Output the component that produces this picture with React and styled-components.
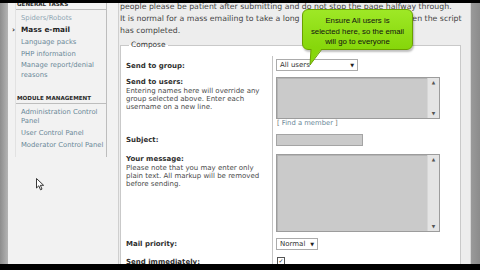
import React from "react";
import styled, { createGlobalStyle } from "styled-components";

const GlobalStyle = createGlobalStyle`
  html, body {
    margin: 0;
    padding: 0;
    background: #000;
  }
  body {
    font-family: "DejaVu Sans", Verdana, sans-serif;
  }
`;

const colors = {
  link: "#6a8898",
  text: "#444",
  label: "#2e2e2e",
  line: "#c9c9c9",
  field: "#cacaca",
};

const Screen = styled.div`
  position: relative;
  width: 480px;
  height: 270px;
  background: #000;
  overflow: hidden;
`;

const Bar = styled.div`
  height: ${(p) => p.$h}px;
  background: #000;
`;

const Viewport = styled.div`
  height: 261px;
  overflow: hidden;
`;

const Page = styled.div`
  display: flex;
  margin-top: -2px;
  height: 270px;
`;

const Edge = styled.div`
  width: ${(p) => p.$w}px;
  flex: none;
  background: ${(p) => p.$bg};
`;

const Sidebar = styled.div`
  width: 103px;
  flex: none;
  padding-left: 7px;
  background: #f2f2f2;
  border-right: 1px solid #cfcfcf;
`;

const Menu = styled.ul`
  list-style: none;
  margin: -1px 0 0 0;
  padding: 0;
  width: 90px;
  height: 157px;
  border-left: 1px solid #e2e2e2;
  border-right: 1px solid #bdbdbd;
`;

const MenuHeader = styled.li`
  margin-top: ${(p) => p.$top || 0}px;
  padding-left: 1px;
  font-size: 5.6px;
  line-height: 8px;
  font-weight: bold;
  text-transform: uppercase;
  color: #2a2a2a;
  border-bottom: 1px solid #bdbdbd;
  padding-bottom: 1px;
  margin-bottom: ${(p) => p.$after}px;
`;

const MenuItem = styled.li`
  position: relative;
  padding-left: 5px;
  margin-bottom: ${(p) => p.$gap}px;
  font-size: ${(p) => (p.$active ? 7.3 : 6.8)}px;
  line-height: ${(p) => p.$lh || 10}px;
  color: ${(p) => (p.$active ? "#1e1e1e" : p.$faded ? "#8fa6b3" : colors.link)};
  font-weight: ${(p) => (p.$active ? "bold" : "normal")};

  &::before {
    content: ${(p) => (p.$active ? '"›"' : "none")};
    position: absolute;
    left: -4px;
    color: #1e1e1e;
  }
`;

const Main = styled.div`
  width: 350px;
  flex: none;
  background: #ededed;
  padding-left: 1px;
  border-right: 1px solid #d6d6d6;
  overflow: hidden;
`;

const Intro = styled.p`
  margin: 0;
  font-size: 7.8px;
  line-height: 12px;
  color: ${colors.text};
  white-space: nowrap;
`;

const Fieldset = styled.fieldset`
  margin: 3px 0 0 0;
  padding: 6px 0 0 0;
  width: 339px;
  border: 1px solid ${colors.line};
  background: #fff;
  min-width: 0;
`;

const Legend = styled.legend`
  margin-left: 8px;
  padding: 0 2px;
  font-size: 7.4px;
  line-height: 10px;
  color: #333;
`;

const Row = styled.div`
  display: grid;
  grid-template-columns: 152px 1fr;
  height: ${(p) => p.$h}px;
`;

const Term = styled.div`
  border-right: 1px solid #c4c4c4;
  padding-left: 5px;
  padding-top: ${(p) => p.$pad}px;
`;

const Label = styled.div`
  font-size: 7px;
  line-height: 10px;
  font-weight: bold;
  color: ${colors.label};
`;

const Desc = styled.div`
  font-size: 7px;
  line-height: 8px;
  color: #4a4a4a;
  white-space: nowrap;
`;

const Detail = styled.div`
  padding-left: 3px;
  padding-top: ${(p) => p.$pad}px;
`;

const Select = styled.div`
  display: flex;
  align-items: center;
  justify-content: space-between;
  box-sizing: border-box;
  width: ${(p) => p.$w}px;
  height: 12px;
  padding: 0 3px 0 3px;
  border: 1px solid #ababab;
  background: #fff;
  font-size: 7px;
  color: #333;

  span:last-child {
    font-size: 5px;
    color: #222;
  }
`;

const TextBox = styled.div`
  display: flex;
  justify-content: flex-end;
  box-sizing: border-box;
  width: 164px;
  height: ${(p) => p.$h}px;
  border: 1px solid #9c9c9c;
  background: ${colors.field};
  box-shadow: inset 1px 1px 0 #b4b4b4;
`;

const ScrollTrack = styled.div`
  display: flex;
  flex-direction: column;
  justify-content: space-between;
  align-items: center;
  width: 11px;
  background: #e4e4e4;
  border-left: 1px solid #d6d6d6;
  font-size: 4.5px;
  line-height: 9px;
  color: #555;
`;

const Input = styled.div`
  box-sizing: border-box;
  width: 87px;
  height: 12px;
  border: 1px solid #a4a4a4;
  background: ${colors.field};
`;

const FindMember = styled.div`
  padding-left: 1px;
  font-size: 6.8px;
  line-height: 8px;
  color: #777;

  a {
    color: ${colors.link};
    text-decoration: none;
  }
`;

const Checkbox = styled.div`
  box-sizing: border-box;
  width: 8px;
  height: 8px;
  margin-left: 1px;
  border: 1px solid #555;
  background: #fff;
  font-size: 6px;
  line-height: 6px;
  text-align: center;
  color: #222;
`;

const Tooltip = styled.div`
  position: absolute;
  left: 302px;
  top: 9px;
  width: 111px;
  height: 41px;
  box-sizing: border-box;
  padding-top: 6px;
  border: 1px solid #6aa000;
  border-radius: 6px;
  background: linear-gradient(#9ee826, #86d60a);
  box-shadow: 1px 2px 2px rgba(0, 0, 0, 0.25);
  font-family: "Liberation Sans", Arial, sans-serif;
  font-size: 7.8px;
  line-height: 10.5px;
  text-align: center;
  color: #111;
`;

const Tail = styled.svg`
  position: absolute;
  left: 306px;
  top: 48px;
`;

const Cursor = styled.svg`
  position: absolute;
  left: 36px;
  top: 178px;
`;

function Scrollable({ h }) {
  return (
    <TextBox $h={h}>
      <ScrollTrack>
        <span>▲</span>
        <span>▼</span>
      </ScrollTrack>
    </TextBox>
  );
}

export default function App() {
  return (
    <>
      <GlobalStyle />
      <Screen>
        <Bar $h={3} />
        <Viewport>
          <Page>
            <Edge $w={8} $bg="linear-gradient(90deg, #8d8d8d, #b4b4b4)" />
            <Sidebar>
              <Menu>
                <MenuHeader $after={3}>General tasks</MenuHeader>
                <MenuItem $gap={2} $faded>
                  Spiders/Robots
                </MenuItem>
                <MenuItem $gap={2} $active>
                  Mass e-mail
                </MenuItem>
                <MenuItem $gap={2}>Language packs</MenuItem>
                <MenuItem $gap={2}>PHP information</MenuItem>
                <MenuItem $gap={0} $lh={9.5}>
                  Manage report/denial reasons
                </MenuItem>
                <MenuHeader $top={14} $after={4}>
                  Module management
                </MenuHeader>
                <MenuItem $gap={3} $lh={9}>
                  Administration Control Panel
                </MenuItem>
                <MenuItem $gap={3} $lh={9}>
                  User Control Panel
                </MenuItem>
                <MenuItem $gap={3} $lh={9}>
                  Moderator Control Panel
                </MenuItem>
              </Menu>
            </Sidebar>
            <Main>
              <Intro>
                people please be patient after submitting and do not stop the page halfway through.
                <br />
                It is normal for a mass emailing to take a long time, you will be notified when the script
                <br />
                has completed.
              </Intro>
              <Fieldset>
                <Legend>Compose</Legend>
                <Row $h={19}>
                  <Term $pad={5}>
                    <Label>Send to group:</Label>
                  </Term>
                  <Detail $pad={3}>
                    <Select $w={82}>
                      <span>All users</span>
                      <span>▼</span>
                    </Select>
                  </Detail>
                </Row>
                <Row $h={56}>
                  <Term $pad={2}>
                    <Label>Send to users:</Label>
                    <Desc>
                      Entering names here will override any
                      <br />
                      group selected above. Enter each
                      <br />
                      username on a new line.
                    </Desc>
                  </Term>
                  <Detail $pad={2}>
                    <Scrollable h={42} />
                    <FindMember>
                      [ <a href="#">Find a member</a> ]
                    </FindMember>
                  </Detail>
                </Row>
                <Row $h={20}>
                  <Term $pad={4}>
                    <Label>Subject:</Label>
                  </Term>
                  <Detail $pad={3}>
                    <Input />
                  </Detail>
                </Row>
                <Row $h={84}>
                  <Term $pad={3}>
                    <Label>Your message:</Label>
                    <Desc>
                      Please note that you may enter only
                      <br />
                      plain text. All markup will be removed
                      <br />
                      before sending.
                    </Desc>
                  </Term>
                  <Detail $pad={3}>
                    <Scrollable h={78} />
                  </Detail>
                </Row>
                <Row $h={18}>
                  <Term $pad={4}>
                    <Label>Mail priority:</Label>
                  </Term>
                  <Detail $pad={3}>
                    <Select $w={42}>
                      <span>Normal</span>
                      <span>▼</span>
                    </Select>
                  </Detail>
                </Row>
                <Row $h={20}>
                  <Term $pad={4}>
                    <Label>Send immediately:</Label>
                  </Term>
                  <Detail $pad={4}>
                    <Checkbox>✓</Checkbox>
                  </Detail>
                </Row>
              </Fieldset>
            </Main>
            <Edge $w={10} $bg="linear-gradient(90deg, #9a9a9a, #8a8a8a)" />
          </Page>
        </Viewport>
        <Bar $h={6} />

        <Tooltip>
          Ensure All users is
          <br />
          selected here, so the email
          <br />
          will go to everyone
        </Tooltip>
        <Tail width="20" height="18" viewBox="0 0 20 18">
          <path d="M5 0 L4 17 L16 0 Z" fill="#87d70b" />
          <path d="M5 1 L4 17 L16 1" fill="none" stroke="#6aa000" strokeWidth="1" />
        </Tail>
        <Cursor width="9" height="13" viewBox="0 0 9 13">
          <path
            d="M0.5 0.5 L0.5 10 L2.8 7.8 L4.5 11.8 L6 11.1 L4.4 7.3 L7.6 7.3 Z"
            fill="#fff"
            stroke="#222"
            strokeWidth="0.9"
          />
        </Cursor>
      </Screen>
    </>
  );
}
